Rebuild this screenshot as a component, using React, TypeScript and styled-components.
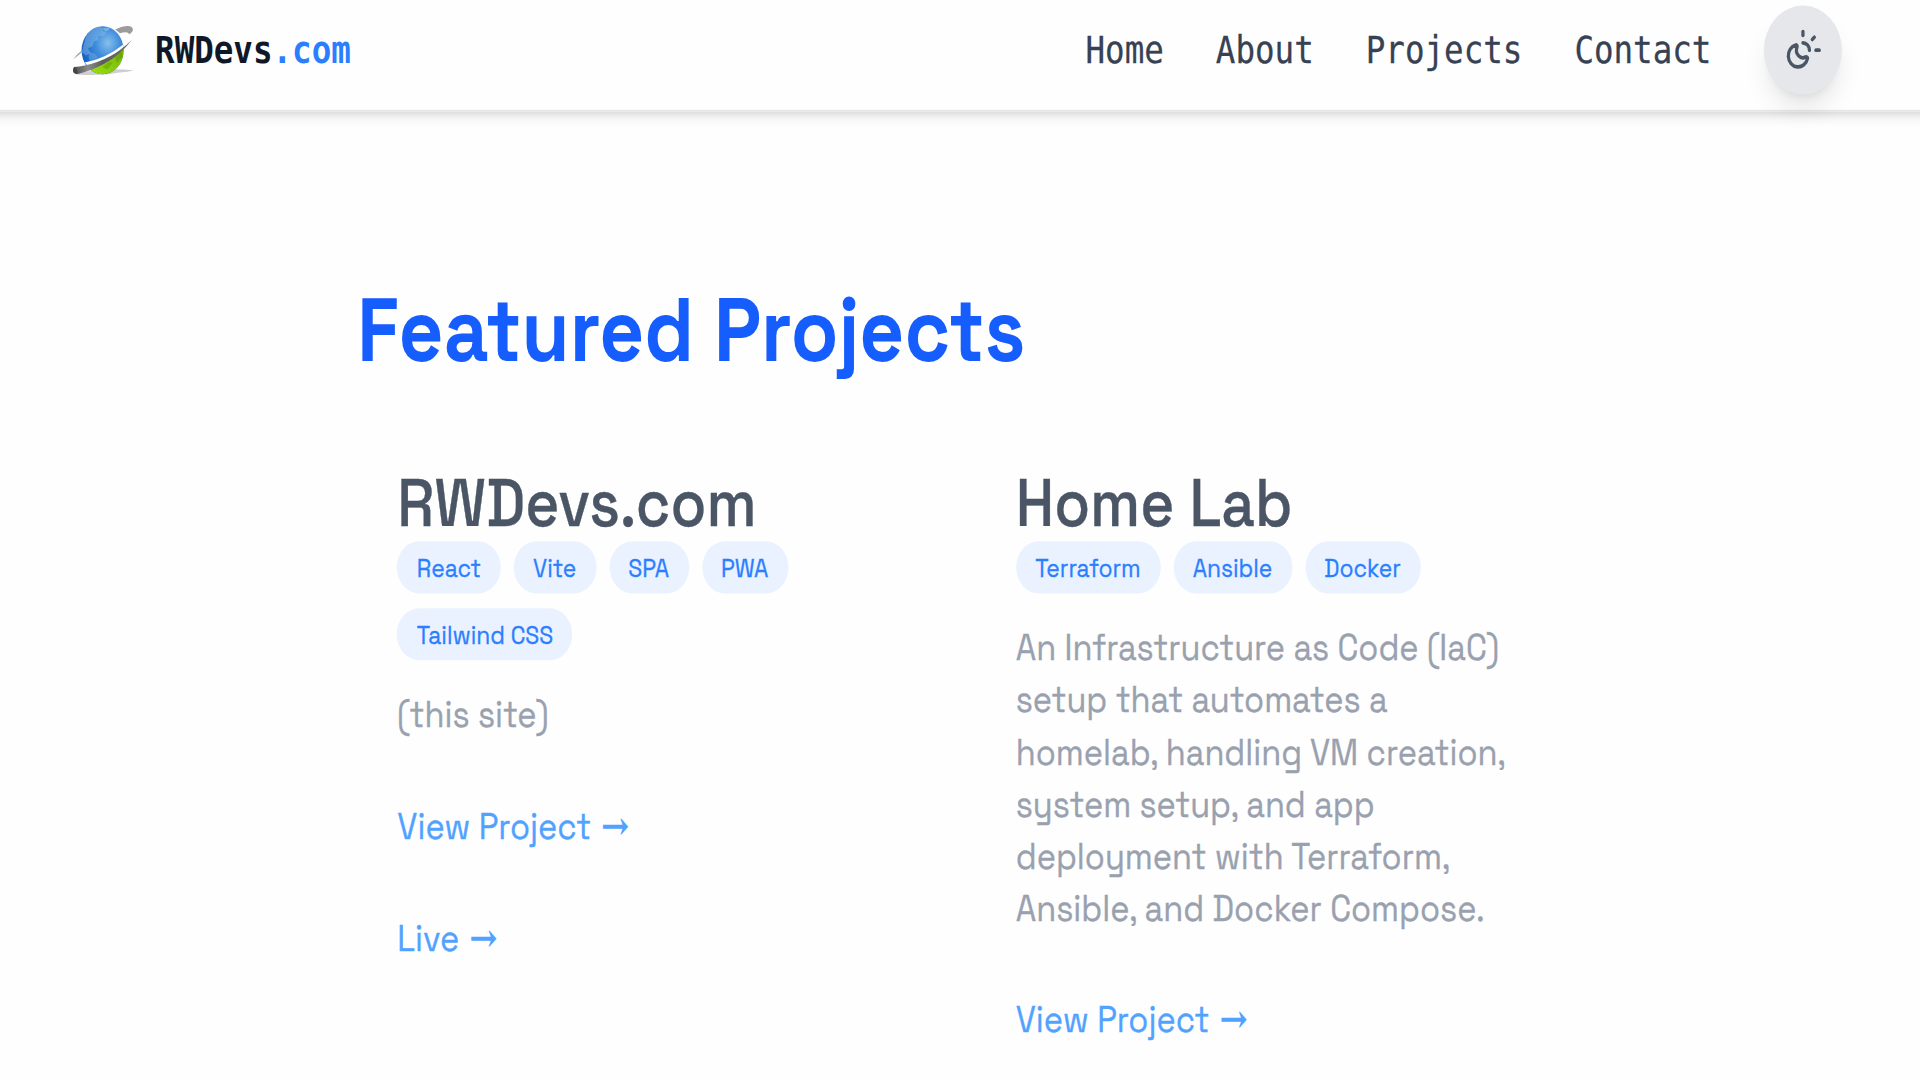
import React from 'react';
import styled, { createGlobalStyle } from 'styled-components';
import { SunMoon } from 'lucide-react';

const GlobalStyle = createGlobalStyle`
  *, *::before, *::after { box-sizing: border-box; }
  html, body { margin: 0; padding: 0; height: 1080px; overflow: hidden; background: #fefefe; }
  h1, h2, h3, p { margin: 0; }
`;

const sans = `"Space Grotesk", Inter, "Liberation Sans", sans-serif`;
const mono = `"DejaVu Sans Mono", monospace`;

/* The page is composed at 1181 x 580.6 and stretched over the full window. */
const Stage = styled.div`
  width: 1181px;
  height: 580.6px;
  transform: scale(1.62574, 1.86015);
  transform-origin: 0 0;
  display: flex;
  flex-direction: column;
  font-family: ${sans};
`;

const Header = styled.header`
  flex: none;
  height: 60px;
  margin: 0 -10px;
  padding: 3.3px 58px 7.7px 53.2px;
  display: flex;
  align-items: center;
  justify-content: space-between;
  background: #fefefe;
  border-bottom: 1px solid #e5e7eb;
  box-shadow: 0 4px 6px -1px rgba(0, 0, 0, 0.1), 0 2px 4px -2px rgba(0, 0, 0, 0.1);
`;

const Brand = styled.a`
  display: flex;
  align-items: center;
  gap: 12.2px;
  font-family: ${mono};
  font-size: 20px;
  font-weight: 700;
  line-height: 28px;
  color: #101828;
`;

const BrandAccent = styled.span`
  color: #2b7fff;
`;

const Logo = styled.svg`
  width: 40px;
  height: 28px;
  display: block;
`;

const Nav = styled.nav`
  display: flex;
  align-items: center;
  gap: 32px;
`;

const NavLink = styled.a`
  font-family: ${mono};
  font-size: 20px;
  line-height: 28px;
  color: #364153;
  -webkit-text-stroke: 0.15px currentColor;
`;

const ThemeButton = styled.button`
  width: 48px;
  height: 48px;
  margin-left: 0.3px;
  padding: 12px;
  border: 0;
  border-radius: 50%;
  display: flex;
  background: #e5e7eb;
  color: #4a5565;
  box-shadow: 0 10px 15px -3px rgba(0, 0, 0, 0.1), 0 4px 6px -4px rgba(0, 0, 0, 0.1);
`;

const Main = styled.main`
  flex: 1;
  padding: 93.8px 220px 0;
  -webkit-text-stroke: 0.2px currentColor;
`;

const SectionTitle = styled.h2`
  margin: 0 0 24px -0.3px;
  font-size: 48px;
  font-weight: 600;
  line-height: 48px;
  letter-spacing: 0.02px;
  color: #155dfc;
  -webkit-text-stroke: 0;
`;

const ProjectGrid = styled.div`
  display: grid;
  grid-template-columns: 356.4px 356.4px;
  column-gap: 24px;
`;

const Card = styled.article`
  padding: 25.2px 0 0 24.4px;
`;

const CardTitle = styled.h3`
  font-size: 36px;
  font-weight: 500;
  line-height: 40px;
  white-space: nowrap;
  color: #4a5565;
`;

const TagList = styled.div`
  display: flex;
  flex-wrap: wrap;
  gap: 8px;
  width: 312px;
  margin-top: -0.2px;
`;

const Tag = styled.span`
  padding: 4px 12px;
  border-radius: 14px;
  font-size: 14px;
  line-height: 20px;
  white-space: nowrap;
  color: #2b7fff;
  background: #eaf2ff;
`;

const Description = styled.p`
  width: 312px;
  margin-top: 15.7px;
  font-size: 20px;
  line-height: 28px;
  color: #99a1af;
`;

const ProjectLink = styled.a`
  display: block;
  height: 28px;
  margin-top: 32px;
  font-size: 20px;
  line-height: 28px;
  color: #51a2ff;
`;

const Arrow = styled.span`
  margin-left: 1px;
  font-family: "DejaVu Serif", serif;
  font-size: 20.8px;
  font-weight: 700;
  line-height: 1;
  vertical-align: 0.7px;
  -webkit-text-stroke: 0;
`;

interface Project {
  title: string;
  tags: string[];
  description: string;
  links: string[];
}

const projects: Project[] = [
  {
    title: 'RWDevs.com',
    tags: ['React', 'Vite', 'SPA', 'PWA', 'Tailwind CSS'],
    description: '(this site)',
    links: ['View Project', 'Live'],
  },
  {
    title: 'Home Lab',
    tags: ['Terraform', 'Ansible', 'Docker'],
    description:
      'An Infrastructure as Code (IaC) setup that automates a homelab, handling VM creation, system setup, and app deployment with Terraform, Ansible, and Docker Compose.',
    links: ['View Project'],
  },
];

const navItems = ['Home', 'About', 'Projects', 'Contact'];

/* Globe with a tilted orbit ring. */
const GlobeLogo = () => (
  <Logo viewBox="0 0 195 156" preserveAspectRatio="none" aria-hidden="true">
    <defs>
      <radialGradient id="sea" cx="0.62" cy="0.36" r="0.7">
        <stop offset="0" stopColor="#86bfeb" />
        <stop offset="0.4" stopColor="#3f8cdb" />
        <stop offset="1" stopColor="#0a55bd" />
      </radialGradient>
      <linearGradient id="ring" x1="0" y1="0" x2="1" y2="0">
        <stop offset="0" stopColor="#4a4a4a" />
        <stop offset="0.25" stopColor="#8a8a8a" />
        <stop offset="0.5" stopColor="#5c5c5c" />
        <stop offset="1" stopColor="#6e6e6e" />
      </linearGradient>
      <linearGradient id="leaf" x1="0" y1="1" x2="1" y2="0">
        <stop offset="0" stopColor="#9be012" />
        <stop offset="1" stopColor="#6fae05" />
      </linearGradient>
      <clipPath id="ball">
        <ellipse cx="98" cy="78" rx="63" ry="72" />
      </clipPath>
    </defs>
    <path d="M20 148 Q100 128 192 138 Q175 144 150 145 Q90 156 20 151 Z" fill="#cfcfcf" />
    <path d="M136 16 C165 2 190 2 189 17 C188 23 183 28 177 31 C177 23 166 22 150 27 Z" fill="#9c9c9c" />
    <g clipPath="url(#ball)">
      <rect x="30" y="0" width="135" height="156" fill="url(#sea)" />
      <path d="M48 36 Q62 12 88 8 L104 14 L98 20 L110 26 L98 36 L86 34 L84 48 L72 52 L68 66 L54 72 L62 86 L48 94 L36 84 Z" fill="#8fc0ea" opacity="0.42" />
      <path d="M58 84 L74 88 L84 98 L76 110 L62 116 L56 100 Z" fill="#8fc0ea" opacity="0.35" />
      <path d="M100 12 L122 8 L116 18 L106 22 Z" fill="#a8d0f0" opacity="0.5" />
      <path d="M66 132 Q124 114 166 54 L170 156 L60 156 Z" fill="url(#leaf)" />
      <path d="M98 128 L118 112 L128 116 L112 136 Z" fill="#6aa507" opacity="0.6" />
      <path d="M136 98 L156 82 L158 98 L140 116 Z" fill="#5e9a04" opacity="0.55" />
      <path d="M44 115 Q108 104 164 58 L164 66 Q112 118 58 130 Z" fill="#ffffff" />
    </g>
    <path d="M10 106 Q20 90 36 78 L36 84 Q22 96 10 106 Z" fill="#a5a5a5" />
    <path d="M12 128 Q30 128 44 124 Q128 106 187 46 Q150 94 104 118 Q60 142 24 149 Q6 149 10 134 Z" fill="url(#ring)" />
    <path d="M14 128 Q22 134 24 148 Q8 150 10 134 Z" fill="#444444" />
  </Logo>
);

export default function App() {
  return (
    <>
      <GlobalStyle />
      <Stage>
        <Header>
          <Brand>
            <GlobeLogo />
            <span>
              RWDevs<BrandAccent>.com</BrandAccent>
            </span>
          </Brand>
          <Nav>
            {navItems.map((item) => (
              <NavLink key={item}>{item}</NavLink>
            ))}
            <ThemeButton aria-label="Toggle theme">
              <SunMoon size={24} />
            </ThemeButton>
          </Nav>
        </Header>
        <Main>
          <SectionTitle>Featured Projects</SectionTitle>
          <ProjectGrid>
            {projects.map((project) => (
              <Card key={project.title}>
                <CardTitle>{project.title}</CardTitle>
                <TagList>
                  {project.tags.map((tag) => (
                    <Tag key={tag}>{tag}</Tag>
                  ))}
                </TagList>
                <Description>{project.description}</Description>
                {project.links.map((link) => (
                  <ProjectLink key={link}>
                    {link} <Arrow>→</Arrow>
                  </ProjectLink>
                ))}
              </Card>
            ))}
          </ProjectGrid>
        </Main>
      </Stage>
    </>
  );
}
